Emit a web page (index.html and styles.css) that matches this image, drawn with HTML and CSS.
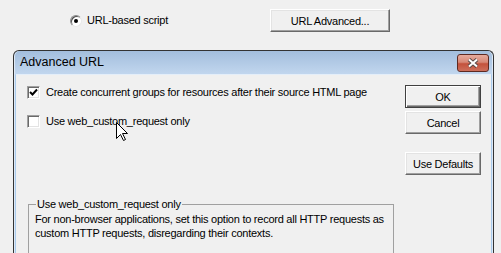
FILE: index.html
```html
<!DOCTYPE html>
<html lang="en">
<head>
    <meta charset="UTF-8">
    <title>Advanced URL</title>
    <link rel="stylesheet" href="styles.css">
</head>
<body>
    <div class="parent-row">
        <label class="radio-label">
            <span class="radio"><span class="radio-dot"></span></span>
            URL-based script
        </label>
        <button class="btn btn-wide">URL Advanced...</button>
    </div>

    <div class="dialog">
        <div class="titlebar">
            <span class="title">Advanced URL</span>
            <span class="close">
                <svg width="14" height="10" viewBox="0 0 14 10">
                    <path d="M3 1.5 L11 8.5 M11 1.5 L3 8.5" stroke="#5a4a48" stroke-width="4" fill="none"/>
                    <path d="M3 1.5 L11 8.5 M11 1.5 L3 8.5" stroke="#fff" stroke-width="2" fill="none"/>
                </svg>
            </span>
        </div>
        <div class="client">
            <div class="options">
                <div class="check-row first">
                    <span class="checkbox">
                        <svg width="9" height="9" viewBox="0 0 9 9">
                            <path d="M1 4 L3.5 6.5 L8 1.5" stroke="#000" stroke-width="2" fill="none"/>
                        </svg>
                    </span>
                    <span>Create concurrent groups for resources after their source HTML page</span>
                </div>
                <div class="check-row">
                    <span class="checkbox"></span>
                    <span>Use web_custom_request only</span>
                </div>
                <fieldset class="group">
                    <legend>Use web_custom_request only</legend>
                    <p>For non-browser applications, set this option to record all HTTP requests as<br>custom HTTP requests, disregarding their contexts.</p>
                </fieldset>
            </div>
            <div class="actions">
                <button class="btn btn-default">OK</button>
                <button class="btn">Cancel</button>
                <button class="btn btn-spaced">Use Defaults</button>
            </div>
        </div>
    </div>

    <svg class="cursor" width="13" height="20" viewBox="0 0 13 20">
        <path d="M0.5 0.5 L0.5 16.5 L4.5 12.5 L7.5 18.5 L9.5 17.5 L6.5 11.5 L11.5 11.5 Z" fill="#fff" stroke="#000" stroke-width="1"/>
    </svg>
</body>
</html>
```

FILE: styles.css
```css
body {
    margin: 0;
    background-color: #f0f0f0;
    font-family: "Liberation Sans", Arial, sans-serif;
    font-size: 11px;
    letter-spacing: -0.25px;
    line-height: 13px;
    color: #000;
    position: relative;
    height: 253px;
    overflow: hidden;
}
.parent-row {
    display: flex;
    align-items: center;
    padding: 9px 0 0 70px;
    height: 23px;
}
.radio-label {
    display: flex;
    align-items: center;
    gap: 5px;
    width: 200px;
}
.radio {
    width: 12px;
    height: 12px;
    box-sizing: border-box;
    border-radius: 50%;
    border: 1px solid;
    border-color: #8a8a8a #e8e8e8 #e8e8e8 #8a8a8a;
    box-shadow: inset 1px 1px #505050;
    background: #fff;
    display: flex;
    align-items: center;
    justify-content: center;
}
.radio-dot {
    width: 4px;
    height: 4px;
    border-radius: 50%;
    background: #000;
}
.btn {
    font-family: inherit;
    font-size: 11px;
    letter-spacing: -0.25px;
    color: #000;
    height: 23px;
    width: 76px;
    padding: 0;
    background: #f0f0f0;
    border: 1px solid;
    border-color: #fff #696969 #696969 #fff;
    box-shadow: inset -1px -1px #a0a0a0, inset 1px 1px #e3e3e3;
}
.btn-wide {
    width: 120px;
}
.btn-default {
    border-color: #404040;
    box-shadow: inset 1px 1px #fff, inset -1px -1px #696969, inset -2px -2px #a0a0a0;
}
.btn-spaced {
    margin-top: 15px;
}
.dialog {
    margin: 18px 0 0 13px;
    width: 481px;
    height: 203px;
    box-sizing: border-box;
    border: 1px solid #333;
    border-bottom: none;
    border-radius: 6px 6px 0 0;
    padding: 0 2px;
    background: linear-gradient(#a3bedd, #c1d6ee 23px, #aacbec 24px);
    box-shadow: inset 1px 0 #dfe9f5, inset -1px 0 #dfe9f5;
}
.titlebar {
    display: flex;
    justify-content: space-between;
    align-items: flex-start;
    height: 23px;
    border-bottom: 1px solid #e4eef9;
}
.title {
    font-size: 12.5px;
    letter-spacing: 0;
    line-height: 23px;
    padding-left: 4px;
}
.close {
    margin: 3px 2px 0 0;
    width: 32px;
    height: 18px;
    box-sizing: border-box;
    border: 1px solid #5e2a22;
    border-radius: 3px;
    background: linear-gradient(#e6ab9d, #d78876 45%, #c4523c 55%, #cd6f5b);
    display: flex;
    align-items: center;
    justify-content: center;
}
.client {
    display: flex;
    background: #f0f0f0;
    height: 178px;
    box-sizing: border-box;
    padding: 10px 10px 0 11px;
    overflow: hidden;
}
.options {
    flex: 1;
}
.check-row {
    display: flex;
    align-items: center;
    gap: 6px;
    height: 13px;
    margin-top: 16px;
}
.check-row.first {
    margin-top: 1px;
}
.checkbox {
    width: 13px;
    height: 13px;
    box-sizing: border-box;
    border: 1px solid;
    border-color: #a0a0a0 #fff #fff #a0a0a0;
    box-shadow: inset 1px 1px #696969, inset -1px -1px #e3e3e3;
    background: #fff;
    display: flex;
    align-items: center;
    justify-content: center;
}
.group {
    margin: 70px 0 0 1px;
    width: 366px;
    height: 60px;
    box-sizing: border-box;
    border: 1px solid #a0a0a0;
    padding: 1px 0 0 6px;
}
.group legend {
    padding: 0 1px;
    margin-left: 1px;
}
.group p {
    margin: 0;
    line-height: 14px;
}
.actions {
    display: flex;
    flex-direction: column;
    gap: 3px;
    width: 76px;
}
.cursor {
    position: absolute;
    left: 116px;
    top: 122px;
}
```
